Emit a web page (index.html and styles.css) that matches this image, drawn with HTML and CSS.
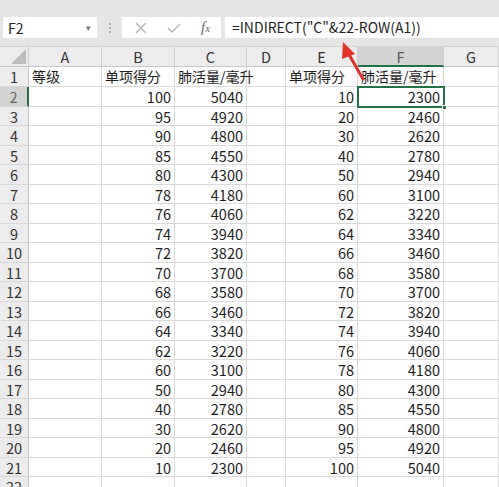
FILE: index.html
```html
<!DOCTYPE html>
<html lang="zh">
<head>
<meta charset="utf-8">
<link rel="stylesheet" href="styles.css">
</head>
<body>
<div class="app">
  <div class="toolbar">
    <div class="namebox"><span class="ref">F2</span><span class="drop">▾</span></div>
    <div class="dots"><i></i><i></i><i></i></div>
    <div class="fxbox">
      <svg class="ic" width="14" height="14" viewBox="0 0 14 14"><path d="M2 2 L12 12 M12 2 L2 12" stroke="#b3b3b3" stroke-width="1.3" fill="none"/></svg>
      <svg class="ic" width="16" height="14" viewBox="0 0 16 14"><path d="M2 7 L6 11 L14 3" stroke="#b3b3b3" stroke-width="1.3" fill="none"/></svg>
      <span class="fx">f<span class="x">x</span></span>
    </div>
    <div class="formula">=INDIRECT("C"&amp;22-ROW(A1))</div>
  </div>
  <div class="sheet">
    <div class="corner"><span class="tri"></span></div>
    <div class="ch">A</div><div class="ch">B</div><div class="ch">C</div><div class="ch">D</div><div class="ch">E</div><div class="ch sel">F</div><div class="ch">G</div>

    <div class="rh">1</div><div class="c">等级</div><div class="c">单项得分</div><div class="c">肺活量/毫升</div><div class="c"></div><div class="c">单项得分</div><div class="c">肺活量/毫升</div><div class="c"></div>
    <div class="rh sel">2</div><div class="c"></div><div class="c n">100</div><div class="c n">5040</div><div class="c"></div><div class="c n">10</div><div class="c n active">2300<span class="handle"></span></div><div class="c"></div>
    <div class="rh">3</div><div class="c"></div><div class="c n">95</div><div class="c n">4920</div><div class="c"></div><div class="c n">20</div><div class="c n">2460</div><div class="c"></div>
    <div class="rh">4</div><div class="c"></div><div class="c n">90</div><div class="c n">4800</div><div class="c"></div><div class="c n">30</div><div class="c n">2620</div><div class="c"></div>
    <div class="rh">5</div><div class="c"></div><div class="c n">85</div><div class="c n">4550</div><div class="c"></div><div class="c n">40</div><div class="c n">2780</div><div class="c"></div>
    <div class="rh">6</div><div class="c"></div><div class="c n">80</div><div class="c n">4300</div><div class="c"></div><div class="c n">50</div><div class="c n">2940</div><div class="c"></div>
    <div class="rh">7</div><div class="c"></div><div class="c n">78</div><div class="c n">4180</div><div class="c"></div><div class="c n">60</div><div class="c n">3100</div><div class="c"></div>
    <div class="rh">8</div><div class="c"></div><div class="c n">76</div><div class="c n">4060</div><div class="c"></div><div class="c n">62</div><div class="c n">3220</div><div class="c"></div>
    <div class="rh">9</div><div class="c"></div><div class="c n">74</div><div class="c n">3940</div><div class="c"></div><div class="c n">64</div><div class="c n">3340</div><div class="c"></div>
    <div class="rh">10</div><div class="c"></div><div class="c n">72</div><div class="c n">3820</div><div class="c"></div><div class="c n">66</div><div class="c n">3460</div><div class="c"></div>
    <div class="rh">11</div><div class="c"></div><div class="c n">70</div><div class="c n">3700</div><div class="c"></div><div class="c n">68</div><div class="c n">3580</div><div class="c"></div>
    <div class="rh">12</div><div class="c"></div><div class="c n">68</div><div class="c n">3580</div><div class="c"></div><div class="c n">70</div><div class="c n">3700</div><div class="c"></div>
    <div class="rh">13</div><div class="c"></div><div class="c n">66</div><div class="c n">3460</div><div class="c"></div><div class="c n">72</div><div class="c n">3820</div><div class="c"></div>
    <div class="rh">14</div><div class="c"></div><div class="c n">64</div><div class="c n">3340</div><div class="c"></div><div class="c n">74</div><div class="c n">3940</div><div class="c"></div>
    <div class="rh">15</div><div class="c"></div><div class="c n">62</div><div class="c n">3220</div><div class="c"></div><div class="c n">76</div><div class="c n">4060</div><div class="c"></div>
    <div class="rh">16</div><div class="c"></div><div class="c n">60</div><div class="c n">3100</div><div class="c"></div><div class="c n">78</div><div class="c n">4180</div><div class="c"></div>
    <div class="rh">17</div><div class="c"></div><div class="c n">50</div><div class="c n">2940</div><div class="c"></div><div class="c n">80</div><div class="c n">4300</div><div class="c"></div>
    <div class="rh">18</div><div class="c"></div><div class="c n">40</div><div class="c n">2780</div><div class="c"></div><div class="c n">85</div><div class="c n">4550</div><div class="c"></div>
    <div class="rh">19</div><div class="c"></div><div class="c n">30</div><div class="c n">2620</div><div class="c"></div><div class="c n">90</div><div class="c n">4800</div><div class="c"></div>
    <div class="rh">20</div><div class="c"></div><div class="c n">20</div><div class="c n">2460</div><div class="c"></div><div class="c n">95</div><div class="c n">4920</div><div class="c"></div>
    <div class="rh">21</div><div class="c"></div><div class="c n">10</div><div class="c n">2300</div><div class="c"></div><div class="c n">100</div><div class="c n">5040</div><div class="c"></div>
    <div class="rh">22</div><div class="c"></div><div class="c"></div><div class="c"></div><div class="c"></div><div class="c"></div><div class="c"></div><div class="c"></div>
  </div>
  <svg class="arrow" width="60" height="60" viewBox="0 0 60 60">
    <path d="M30 38 L14 10" stroke="#e2312b" stroke-width="3" stroke-linecap="round" fill="none"/>
    <path d="M10 1 L22 13 L9 18 Z" fill="#e2312b"/>
  </svg>
</div>
</body>
</html>
```
FILE: styles.css
```css
* { box-sizing: border-box; }
html, body { margin: 0; padding: 0; }
body {
  width: 499px;
  height: 487px;
  overflow: hidden;
  background: #ffffff;
  font-family: "Noto Sans CJK SC", "Noto Sans", sans-serif;
  color: #1e1e1e;
}
.app { position: relative; width: 499px; height: 487px; overflow: hidden; }

.toolbar {
  height: 47px;
  background: #e5e5e5;
  border-bottom: 1px solid #d4d4d4;
  display: flex;
  align-items: flex-start;
  padding: 17px 0 0 3px;
}
.namebox {
  width: 94px;
  height: 21px;
  background: #fff;
  display: flex;
  align-items: center;
  justify-content: space-between;
  padding: 0 6px 0 5px;
  font-size: 14px;
  color: #222;
}
.drop { font-size: 9px; color: #777; }
.dots {
  width: 25px;
  height: 21px;
  display: flex;
  flex-direction: column;
  align-items: center;
  justify-content: center;
  gap: 2px;
}
.dots i { width: 2px; height: 2px; background: #b0b0b0; display: block; }
.fxbox {
  width: 99px;
  height: 21px;
  background: #fff;
  display: flex;
  align-items: center;
  padding-left: 12px;
  gap: 18px;
}
.fx {
  font-family: "Liberation Serif", serif;
  font-style: italic;
  font-size: 15px;
  color: #666;
  margin-left: 1px;
}
.fx .x { font-size: 11px; }
.formula {
  flex: 1;
  height: 21px;
  margin-left: 4px;
  background: #fff;
  font-size: 14px;
  line-height: 21px;
  padding-left: 7px;
  color: #1e1e1e;
  white-space: nowrap;
}

.sheet {
  display: grid;
  grid-template-columns: 29px 73px 73px 72px 39px 72px 86px 55px;
  grid-template-rows: 20px 20px repeat(21, 19.5px);
  font-size: 14px;
}
.corner {
  background: #ececec;
  border-right: 1px solid #d0d0d0;
  border-bottom: 1px solid #c8c8c8;
  position: relative;
}
.tri {
  position: absolute;
  right: 2px;
  bottom: 2px;
  width: 0; height: 0;
  border-left: 15px solid transparent;
  border-bottom: 15px solid #bdbdbd;
}
.ch {
  background: #ececec;
  border-right: 1px solid #d0d0d0;
  border-bottom: 1px solid #c8c8c8;
  text-align: center;
  line-height: 19px;
  font-size: 14.5px;
  color: #333;
}
.ch.sel {
  background: #d3d3d3;
  border-bottom: 2px solid #217346;
  color: #555;
}
.rh {
  background: #ececec;
  border-right: 1px solid #c8c8c8;
  border-bottom: 1px solid #d8d8d8;
  text-align: center;
  line-height: 19px;
  font-size: 14.5px;
  color: #333;
}
.rh.sel {
  background: #d3d3d3;
  border-right: 2px solid #217346;
  color: #666;
}
.c {
  border-right: 1px solid #dadada;
  border-bottom: 1px solid #dadada;
  padding: 0 3px;
  line-height: 19px;
  white-space: nowrap;
  overflow: visible;
  position: relative;
}
.n { text-align: right; font-size: 14.5px; }
.active {
  outline: 2px solid #217346;
  outline-offset: -1px;
  z-index: 1;
}
.handle {
  position: absolute;
  right: -4px;
  bottom: -4px;
  width: 5px;
  height: 5px;
  background: #217346;
  border: 1px solid #fff;
}
.arrow {
  position: absolute;
  left: 333px;
  top: 41px;
}
```
